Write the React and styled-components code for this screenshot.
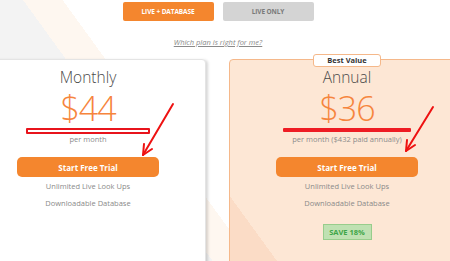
import React from 'react'
import styled, { createGlobalStyle } from 'styled-components'

const GlobalStyle = createGlobalStyle`
  html, body {
    margin: 0;
    padding: 0;
    overflow: hidden;
  }
  body {
    width: 450px;
    height: 261px;
    font-family: "Open Sans", "Liberation Sans", sans-serif;
    background:
      linear-gradient(54deg, #f3f3f3 0 172px, #fef7f0 172px 204px, #ffffff 204px);
  }
`

const plans = [
  {
    name: 'Monthly',
    price: '$44',
    note: 'per month',
    marker: 'box',
    featured: false,
  },
  {
    name: 'Annual',
    price: '$36',
    note: 'per month ($432 paid annually)',
    marker: 'bar',
    featured: true,
    badge: 'Best Value',
    saving: 'SAVE 18%',
  },
]

const App = () => {
  return (
    <Page>
      <GlobalStyle />
      <Container>
        <Toggle>
          <ToggleButton $active>LIVE + DATABASE</ToggleButton>
          <ToggleButton>LIVE ONLY</ToggleButton>
        </Toggle>
        <HelpLink href="#">Which plan is right for me?</HelpLink>
        <Plans>
          {plans.map((plan) => (
            <Card key={plan.name} $featured={plan.featured}>
              {plan.badge && <Badge>{plan.badge}</Badge>}
              <PlanName>{plan.name}</PlanName>
              <Price>{plan.price}</Price>
              <Marker $variant={plan.marker} />
              <Note>{plan.note}</Note>
              <TrialButton>Start Free Trial</TrialButton>
              <Features>
                <li>Unlimited Live Look Ups</li>
                <li>Downloadable Database</li>
              </Features>
              {plan.saving && <Saving>{plan.saving}</Saving>}
            </Card>
          ))}
        </Plans>
      </Container>
      <Arrows width="450" height="261" viewBox="0 0 450 261">
        <g fill="none" stroke="#ee1111" strokeWidth="2" strokeLinecap="round" strokeLinejoin="round">
          <path d="M173 104 L143 155" />
          <path d="M144 144 L143 155 L152 149" />
          <path d="M433 107 L406 151" />
          <path d="M407 140 L406 151 L415 145" />
        </g>
      </Arrows>
    </Page>
  )
}

const Page = styled.div`
  position: relative;
  width: 450px;
  height: 261px;
  overflow: hidden;
`

const Container = styled.div`
  width: 496px;
  margin-left: -30px;
  text-align: center;
`

const Toggle = styled.div`
  display: flex;
  justify-content: center;
  gap: 9px;
  padding-top: 2px;
`

const ToggleButton = styled.div`
  width: 91px;
  height: 19px;
  border-radius: 2px;
  display: flex;
  align-items: center;
  justify-content: center;
  font-size: 6.5px;
  font-weight: 700;
  letter-spacing: -0.1px;
  background: ${(p) => (p.$active ? '#f4862e' : '#d4d4d4')};
  color: ${(p) => (p.$active ? '#ffffff' : '#7a7a7a')};
`

const HelpLink = styled.a`
  display: block;
  margin-top: 16px;
  font-size: 7.5px;
  line-height: 10px;
  font-style: italic;
  color: #8a8a8a;
  text-decoration: underline;
`

const Plans = styled.div`
  display: flex;
  gap: 23px;
  margin-top: 12px;
`

const Card = styled.div`
  position: relative;
  box-sizing: border-box;
  width: 236px;
  height: 220px;
  padding-top: 8px;
  border-radius: 4px;
  border: 1px solid ${(p) => (p.$featured ? '#f5b88a' : '#e4e4e4')};
  background: ${(p) =>
    p.$featured
      ? 'linear-gradient(54deg, #fbdcc6 0 48px, #fde7d5 48px)'
      : '#ffffff'};
  box-shadow: ${(p) => (p.$featured ? 'none' : '2px 1px 3px rgba(0, 0, 0, 0.16)')};
  display: flex;
  flex-direction: column;
  align-items: center;
`

const Badge = styled.div`
  position: absolute;
  top: -6px;
  left: 50%;
  transform: translateX(-50%);
  width: 66px;
  height: 11px;
  line-height: 11px;
  background: #ffffff;
  border: 1px solid #f5b88a;
  border-radius: 3px;
  font-size: 7.5px;
  font-weight: 700;
  color: #333333;
`

const PlanName = styled.div`
  font-size: 15.5px;
  line-height: 19px;
  font-weight: 300;
  color: #4a4a4a;
`

const Price = styled.div`
  margin-top: 4px;
  font-size: 34px;
  line-height: 34px;
  font-weight: 300;
  color: #f6853d;
  letter-spacing: -1px;
`

const Marker = styled.div`
  box-sizing: border-box;
  margin-top: 3px;
  height: ${(p) => (p.$variant === 'box' ? '6px' : '4px')};
  width: ${(p) => (p.$variant === 'box' ? '124px' : '128px')};
  margin-bottom: ${(p) => (p.$variant === 'box' ? '0' : '2px')};
  border-radius: 1px;
  background: ${(p) => (p.$variant === 'box' ? '#ffffff' : '#ee1c24')};
  border: ${(p) => (p.$variant === 'box' ? '2px solid #e8141c' : 'none')};
`

const Note = styled.div`
  font-size: 7.5px;
  line-height: 10px;
  color: #8c8c8c;
`

const TrialButton = styled.div`
  margin-top: 13px;
  width: 142px;
  height: 20px;
  border-radius: 5px;
  background: #f4862e;
  color: #ffffff;
  font-size: 8px;
  font-weight: 700;
  display: flex;
  align-items: center;
  justify-content: center;
`

const Features = styled.ul`
  list-style: none;
  margin: 4px 0 0;
  padding: 0;
  display: flex;
  flex-direction: column;
  gap: 6.5px;
  font-size: 7.5px;
  line-height: 10px;
  color: #8a8a8a;
`

const Saving = styled.div`
  margin-top: 16px;
  width: 47px;
  height: 14px;
  line-height: 14px;
  background: #bfe1b2;
  border: 1px solid #98cd8c;
  color: #3ea548;
  font-size: 7.5px;
  font-weight: 700;
`

const Arrows = styled.svg`
  position: absolute;
  top: 0;
  left: 0;
  pointer-events: none;
`

export default App
